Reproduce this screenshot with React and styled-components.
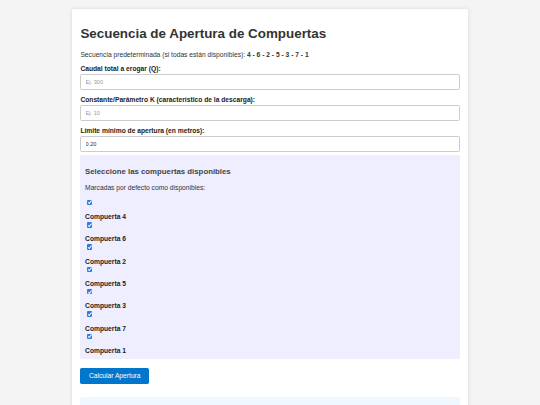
import React from "react";
import styled, { createGlobalStyle } from "styled-components";

const Global = createGlobalStyle`
  html, body { margin: 0; padding: 0; background: #f4f4f4; }
  body {
    font-family: "Liberation Sans", Arial, sans-serif;
    font-size: 6.7px;
    line-height: 7.7px;
    color: #333;
  }
`;

const Page = styled.div`
  padding-top: 9px;
  display: flex;
  justify-content: center;
`;

const Card = styled.div`
  width: 396px;
  box-sizing: border-box;
  background: #fff;
  padding: 8.4px;
  border-radius: 2px;
  box-shadow: 0 0 4px rgba(0, 0, 0, 0.12);
`;

const Title = styled.h1`
  font-size: 13.4px;
  line-height: 15.4px;
  font-weight: bold;
  color: #333;
  margin: 9px 0;
`;

const Text = styled.p`
  margin: 6.7px 0;
`;

const Label = styled.label`
  display: block;
  font-weight: bold;
  color: #222;
  margin: 5.8px 0 1.5px;
`;

const Input = styled.input`
  display: block;
  width: 100%;
  height: 15.8px;
  box-sizing: border-box;
  margin: 0;
  padding: 0 4.2px;
  border: 1px solid #ccc;
  border-radius: 1.7px;
  font-family: "Liberation Sans", Arial, sans-serif;
  font-size: 5.6px;
  color: #333;
  outline: none;
  &::placeholder { color: #999; }
`;

const Panel = styled.div`
  margin-top: 3px;
  background: #eeeeff;
  padding: 4.7px;
  border-radius: 2px;
`;

const PanelTitle = styled.h3`
  font-size: 7.8px;
  line-height: 9px;
  font-weight: bold;
  color: #444;
  margin: 7.8px 0;
`;

const List = styled.div`
  display: flex;
  flex-direction: column;
`;

const Item = styled.div`
  display: flex;
  flex-direction: column;
  align-items: flex-start;
`;

const Check = styled.input`
  appearance: none;
  position: relative;
  width: 5.5px;
  height: 5.5px;
  margin: 1.3px 0 1.3px 1.7px;
  border-radius: 1px;
  background: #2b7de9;
  &::after {
    content: "";
    position: absolute;
    left: 1.9px;
    top: 0.7px;
    width: 1.2px;
    height: 2.6px;
    border: solid #fff;
    border-width: 0 0.8px 0.8px 0;
    transform: rotate(40deg);
  }
`;

const ItemLabel = styled.label`
  font-weight: bold;
  color: #222;
  margin-top: 6.5px;
`;

const Button = styled.button`
  display: block;
  margin-top: 8.6px;
  height: 16px;
  padding: 0 8.5px;
  background: #0077cc;
  color: #fff;
  border: none;
  border-radius: 1.7px;
  font-family: "Liberation Sans", Arial, sans-serif;
  font-size: 6.7px;
  cursor: pointer;
`;

const Result = styled.div`
  margin-top: 13px;
  height: 40px;
  background: #f0f8ff;
  border-radius: 2px;
`;

const gates = [4, 6, 2, 5, 3, 7, 1];

export default function App() {
  return (
    <>
      <Global />
      <Page>
        <Card>
          <Title>Secuencia de Apertura de Compuertas</Title>
          <Text>
            Secuencia predeterminada (si todas están disponibles):{" "}
            <strong>4 - 6 - 2 - 5 - 3 - 7 - 1</strong>
          </Text>
          <Label htmlFor="q">Caudal total a erogar (Q):</Label>
          <Input id="q" placeholder="Ej. 300" />
          <Label htmlFor="k">Constante/Parámetro K (característico de la descarga):</Label>
          <Input id="k" placeholder="Ej. 10" />
          <Label htmlFor="min">Límite mínimo de apertura (en metros):</Label>
          <Input id="min" defaultValue="0.20" />
          <Panel>
            <PanelTitle>Seleccione las compuertas disponibles</PanelTitle>
            <Text>Marcadas por defecto como disponibles:</Text>
            <List>
              {gates.map((g) => (
                <Item key={g}>
                  <Check type="checkbox" id={`c${g}`} defaultChecked />
                  <ItemLabel htmlFor={`c${g}`}>Compuerta {g}</ItemLabel>
                </Item>
              ))}
            </List>
          </Panel>
          <Button>Calcular Apertura</Button>
          <Result />
        </Card>
      </Page>
    </>
  );
}
